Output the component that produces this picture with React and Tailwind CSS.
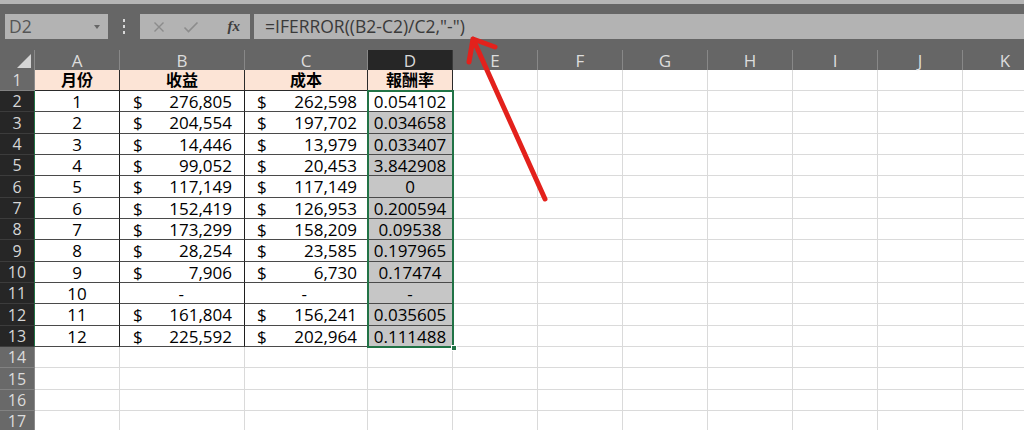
import React from 'react';

const COLS = [
  { key: 'A', w: 'w-[85px]' },
  { key: 'B', w: 'w-[125px]' },
  { key: 'C', w: 'w-[123px]' },
  { key: 'D', w: 'w-[85px]' },
  { key: 'E', w: 'w-[85px]' },
  { key: 'F', w: 'w-[85px]' },
  { key: 'G', w: 'w-[85px]' },
  { key: 'H', w: 'w-[85px]' },
  { key: 'I', w: 'w-[85px]' },
  { key: 'J', w: 'w-[85px]' },
  { key: 'K', w: 'w-[85px]' },
];

const DATA = [
  [1, '276,805', '262,598', '0.054102'],
  [2, '204,554', '197,702', '0.034658'],
  [3, '14,446', '13,979', '0.033407'],
  [4, '99,052', '20,453', '3.842908'],
  [5, '117,149', '117,149', '0'],
  [6, '152,419', '126,953', '0.200594'],
  [7, '173,299', '158,209', '0.09538'],
  [8, '28,254', '23,585', '0.197965'],
  [9, '7,906', '6,730', '0.17474'],
  [10, null, null, '-'],
  [11, '161,804', '156,241', '0.035605'],
  [12, '225,592', '202,964', '0.111488'],
];

const rowH = (n) => (n % 3 === 0 ? 'h-[22px]' : 'h-[21px]');

const Money = ({ v, pl, pr }) =>
  v === null ? (
    <div className="w-full text-right pr-[60px]">-</div>
  ) : (
    <div className={`w-full flex justify-between ${pl} ${pr}`}>
      <span>$</span>
      <span>{v}</span>
    </div>
  );

const RowHeader = ({ n, dark }) => (
  <div
    className={`w-[35px] shrink-0 flex items-center justify-center text-[16px] leading-none border-r ${
      dark
        ? 'bg-[#262626] text-[#d6d6d6] border-b border-b-[#3c3c3c] border-r-[#217346]'
        : 'bg-[#696969] text-[#dcdcdc] border-b border-b-[#828282] border-r-[#8a8a8a]'
    }`}
  >
    {n}
  </div>
);

const EmptyCells = ({ from }) =>
  COLS.slice(from).map((c) => (
    <div key={c.key} className={`${c.w} shrink-0 border-r border-b border-[#dadada]`} />
  ));

export default function App() {
  return (
    <div className="relative w-[1024px] h-[430px] overflow-hidden bg-white font-['Open_Sans','Noto_Sans_CJK_TC',sans-serif] text-black">
      {/* title strip */}
      <div className="h-[4px] bg-[#b5b5b5]" />

      {/* formula bar */}
      <div className="bg-[#666666] pt-[10px] pb-[11px] flex items-stretch">
        <div className="ml-[5px] w-[103px] h-[25px] bg-[#b3b3b3] flex items-center justify-between pl-[4px] pr-[8px]">
          <span className="text-[17.5px] text-[#555555] leading-none">D2</span>
          <svg width="6" height="4" viewBox="0 0 6 4">
            <polygon points="0,0 6,0 3,4" fill="#666" />
          </svg>
        </div>
        <div className="w-[32px] flex flex-col items-center justify-center gap-[3px]">
          <div className="w-[2px] h-[3px] bg-[#d8d8d8]" />
          <div className="w-[2px] h-[3px] bg-[#d8d8d8]" />
          <div className="w-[2px] h-[3px] bg-[#d8d8d8]" />
        </div>
        <div className="w-[110px] h-[25px] bg-[#b3b3b3] flex items-center pl-[13px] pr-[10px]">
          <svg width="12" height="12" viewBox="0 0 12 12">
            <path d="M1.5 1.5 L10.5 10.5 M10.5 1.5 L1.5 10.5" stroke="#8c8c8c" strokeWidth="1.4" />
          </svg>
          <svg width="16" height="12" viewBox="0 0 16 12" className="ml-[18px]">
            <path d="M1.5 6.5 L5.5 10.5 L14.5 1.5" stroke="#8c8c8c" strokeWidth="1.6" fill="none" />
          </svg>
          <span className="ml-auto font-['Liberation_Serif',serif] italic font-bold text-[15px] text-[#3e3e3e] leading-none">
            fx
          </span>
        </div>
        <div className="ml-[4px] flex-1 h-[25px] bg-[#b3b3b3] flex items-center pl-[11px]">
          <span className="text-[17.5px] text-[#3a3a3a] leading-none">=IFERROR((B2-C2)/C2,"-")</span>
        </div>
      </div>

      {/* sheet */}
      <div className="relative">
        {/* column headers */}
        <div className="flex h-[20px] bg-[#666666]">
          <div className="w-[35px] shrink-0 relative border-r border-[#8a8a8a]">
            <svg width="35" height="20" viewBox="0 0 35 20" className="absolute inset-0">
              <polygon points="17,18 31,4 31,18" fill="#d4d4d4" />
            </svg>
          </div>
          {COLS.map((c) => (
            <div
              key={c.key}
              className={`${c.w} shrink-0 flex items-center justify-center text-[17px] leading-none border-r ${
                c.key === 'D'
                  ? 'bg-[#262626] text-[#d9d9d9] border-[#3a3a3a]'
                  : 'text-[#dddddd] border-[#888888]'
              }`}
            >
              {c.key}
            </div>
          ))}
        </div>

        {/* row 1 */}
        <div className={`flex ${rowH(1)}`}>
          <RowHeader n={1} />
          {['月份', '收益', '成本', '報酬率'].map((t, i) => (
            <div
              key={t}
              className={`${COLS[i].w} shrink-0 bg-[#fce4d6] flex items-center justify-center font-bold text-[16px] leading-none border-r border-b border-[#2a2a2a]`}
            >
              {t}
            </div>
          ))}
          <EmptyCells from={4} />
        </div>

        {/* data rows */}
        {DATA.map(([m, rev, cost, ratio], idx) => {
          const n = idx + 2;
          return (
            <div key={n} className={`flex ${rowH(n)} text-[17px] leading-none`}>
              <RowHeader n={n} dark />
              <div className="w-[85px] shrink-0 flex items-center justify-center border-r border-r-[#1e1e1e] border-b border-b-[#4a4a4a]">
                {m}
              </div>
              <div className="w-[125px] shrink-0 flex items-center border-r border-r-[#1e1e1e] border-b border-b-[#4a4a4a]">
                <Money v={rev} pl="pl-[13px]" pr="pr-[12px]" />
              </div>
              <div className="w-[123px] shrink-0 flex items-center border-r border-r-[#1e1e1e] border-b border-b-[#4a4a4a]">
                <Money v={cost} pl="pl-[12px]" pr="pr-[10px]" />
              </div>
              <div
                className={`w-[85px] shrink-0 flex items-center justify-center border-r border-r-[#1e1e1e] border-b border-b-[#4a4a4a] ${
                  n === 2 ? 'bg-white' : 'bg-[#c6c6c6]'
                }`}
              >
                {ratio}
              </div>
              <EmptyCells from={4} />
            </div>
          );
        })}

        {/* empty rows */}
        {[14, 15, 16, 17].map((n) => (
          <div key={n} className={`flex ${rowH(n)}`}>
            <RowHeader n={n} />
            <EmptyCells from={0} />
          </div>
        ))}

        {/* selection outline D2:D13 */}
        <div className="absolute left-[367px] top-[40px] w-[87px] h-[258px] border-2 border-[#217346] pointer-events-none" />
        <div className="absolute left-[451px] top-[295px] w-[6px] h-[6px] bg-[#217346] border border-white pointer-events-none" />
      </div>

      {/* red arrow */}
      <svg className="absolute inset-0 pointer-events-none" width="1024" height="430" viewBox="0 0 1024 430">
        <path
          d="M545 199 L473 39 M473 39 L495 47 M473 39 L469 62"
          stroke="#e3211c"
          strokeWidth="5"
          strokeLinecap="round"
          strokeLinejoin="round"
          fill="none"
        />
      </svg>
    </div>
  );
}
